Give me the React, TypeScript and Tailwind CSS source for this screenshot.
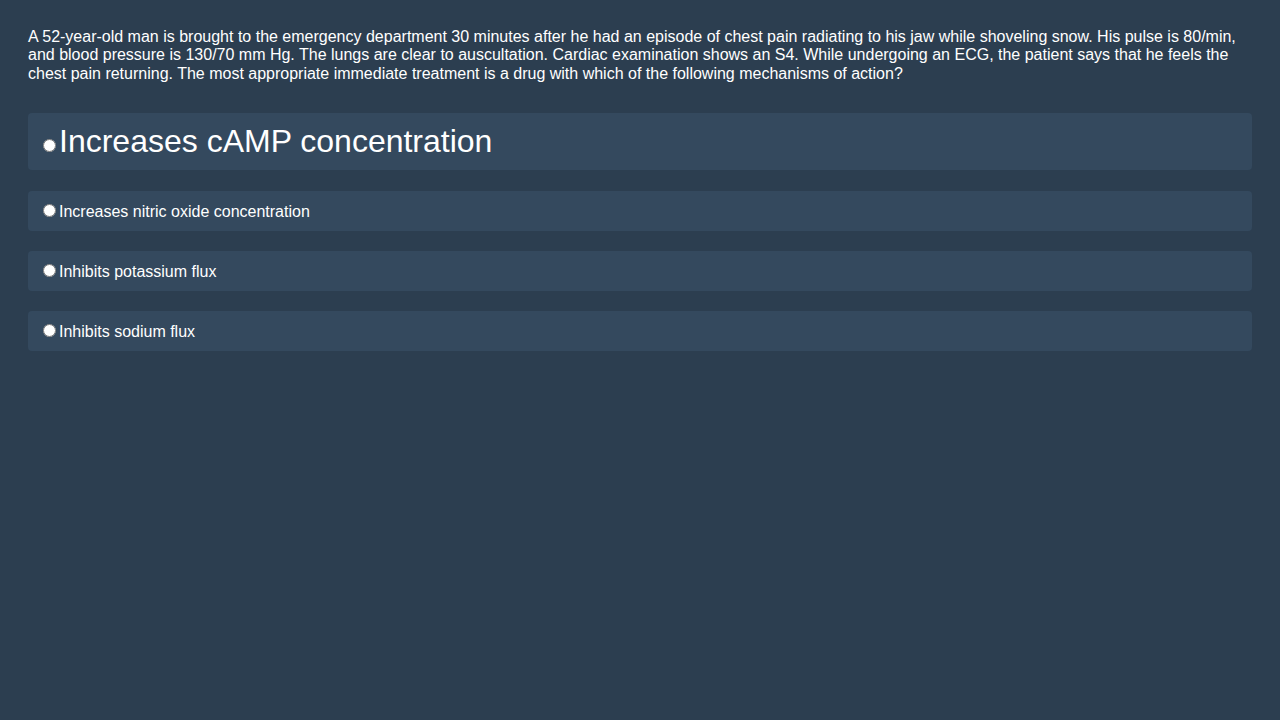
const options = [
  { id: "a", text: "Increases cAMP concentration", big: true },
  { id: "b", text: "Increases nitric oxide concentration" },
  { id: "c", text: "Inhibits potassium flux" },
  { id: "d", text: "Inhibits sodium flux" },
];

export default function App() {
  return (
    <div
      className="min-h-screen w-full bg-[#2c3e50] p-[28px] text-white"
      style={{ fontFamily: '"Liberation Sans", Arial, sans-serif' }}
    >
      <p className="mb-[30px] text-[16px] leading-[18.4px]">
        A 52-year-old man is brought to the emergency department 30 minutes after he had an episode of chest pain
        radiating to his jaw while shoveling snow. His pulse is 80/min, and blood pressure is 130/70 mm Hg. The lungs
        are clear to auscultation. Cardiac examination shows an S4. While undergoing an ECG, the patient says that he
        feels the chest pain returning. The most appropriate immediate treatment is a drug with which of the following
        mechanisms of action?
      </p>
      <div>
        {options.map((o) => (
          <div
            key={o.id}
            className={
              o.big
                ? "mb-[21px] rounded bg-[#34495e] px-[10px] py-[10px] text-[32px] leading-[37px]"
                : "mb-[20px] rounded bg-[#34495e] px-[10px] py-[10px] text-[16px] leading-[18px]"
            }
          >
            <label className="cursor-pointer">
              <input
                type="radio"
                name="answer"
                className="ml-[5px] mr-[3px] mt-[3px] inline-block h-[13px] w-[13px] align-baseline"
              />
              {o.text}
            </label>
          </div>
        ))}
      </div>
    </div>
  );
}
